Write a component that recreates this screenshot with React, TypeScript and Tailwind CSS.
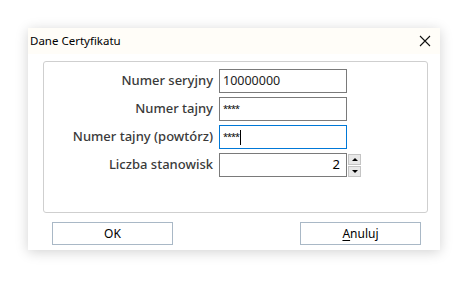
import React from "react"

const font = { fontFamily: '"Noto Sans", "Open Sans", sans-serif' }

function Field({ label, children }: { label: string; children: React.ReactNode }) {
  return (
    <div className="flex items-center h-6">
      <div className="w-[175px] pr-[6px] text-right text-[13px] font-medium text-[#3a3a3a]">{label}</div>
      {children}
    </div>
  )
}

function Spinner() {
  return (
    <div className="ml-px flex flex-col gap-px h-[23px] w-[13px]">
      <div className="flex-1 bg-[#e8e8e8] border border-[#c4c4c4] flex items-center justify-center">
        <div className="w-0 h-0 border-x-[3px] border-x-transparent border-b-[3px] border-b-black" />
      </div>
      <div className="flex-1 bg-[#e8e8e8] border border-[#c4c4c4] flex items-center justify-center">
        <div className="w-0 h-0 border-x-[3px] border-x-transparent border-t-[3px] border-t-black" />
      </div>
    </div>
  )
}

export default function App() {
  return (
    <div className="w-[468px] h-[281px] bg-white pt-[28px] pl-[28px]" style={font}>
      <div className="w-[412px] h-[222px] bg-white shadow-[0_2px_12px_rgba(0,0,0,0.18)] flex flex-col">
        <div className="h-[26px] flex items-center justify-between pl-[2px] pr-[8px] bg-[#fffdf8]">
          <span className="text-[11.5px] text-black">Dane Certyfikatu</span>
          <svg width="12" height="12" viewBox="0 0 12 12" className="mr-[1px]">
            <path d="M1 1L11 11M11 1L1 11" stroke="#111" strokeWidth="1.1" />
          </svg>
        </div>
        <div className="mt-[7px] ml-[15px] mr-[12px] h-[152px] border border-[#cfcfcf] rounded-[3px] pt-[7px] flex flex-col gap-[4px]">
          <Field label="Numer seryjny">
            <div className="w-[128px] h-6 border border-[#7a7a7a] px-[3px] flex items-center text-[12.5px] text-[#222]">10000000</div>
          </Field>
          <Field label="Numer tajny">
            <div className="w-[128px] h-6 border border-[#7a7a7a] px-[3px] flex items-center text-[9px] tracking-[-1px] text-black">****</div>
          </Field>
          <Field label="Numer tajny (powtórz)">
            <div className="w-[128px] h-6 border border-[#0078d7] px-[3px] flex items-center text-[9px] text-black">
              <span className="tracking-[-1px]">****</span>
              <span className="ml-[1px] w-px h-[15px] bg-black" />
            </div>
          </Field>
          <Field label="Liczba stanowisk">
            <div className="w-[128px] h-6 border border-[#7a7a7a] px-[6px] flex items-center justify-end text-[13px] text-black">2</div>
            <Spinner />
          </Field>
        </div>
        <div className="mt-[9px] flex justify-between pl-[24px] pr-[19px]">
          <button className="w-[121px] h-[23px] border border-[#a9b8c6] bg-white text-[12px] text-black">OK</button>
          <button className="w-[121px] h-[23px] border border-[#a9b8c6] bg-white text-[12px] text-black">
            <span className="underline underline-offset-2">A</span>nuluj
          </button>
        </div>
      </div>
    </div>
  )
}
